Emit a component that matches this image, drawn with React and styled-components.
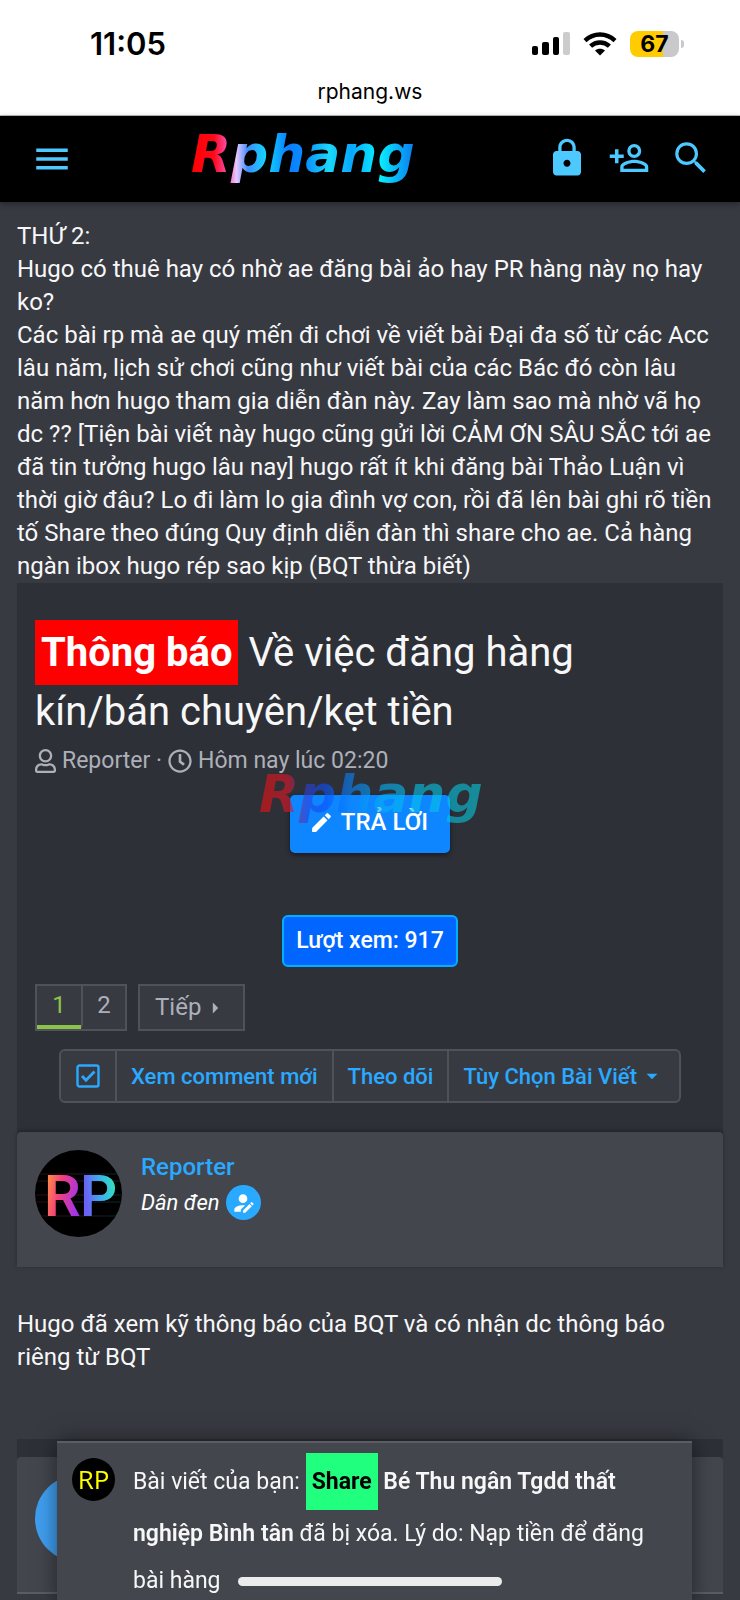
import React from 'react';
import styled, { createGlobalStyle, css } from 'styled-components';
import { MdMenu, MdLock, MdEdit, MdArrowRight, MdArrowDropDown } from 'react-icons/md';
import { FaRegUser, FaRegClock } from 'react-icons/fa';

const colors = {
  page: '#383a42',
  panel: '#2d3037',
  card: '#43464d',
  line: '#4f5259',
  accent: '#29a9ff',
  headerIcon: '#4dc9ff',
  muted: '#adb0b9',
  text: '#f7f7f8',
};

const GlobalStyle = createGlobalStyle`
  * { box-sizing: border-box; }
  body {
    margin: 0;
    background: ${colors.page};
    color: ${colors.text};
    font-family: Roboto, "Liberation Sans", sans-serif;
    font-size: 24px;
    line-height: 33px;
    overflow-x: hidden;
  }
  a { color: inherit; text-decoration: none; }
  button { font: inherit; border: 0; cursor: pointer; }
  p, h1 { margin: 0; }
  svg { display: block; flex: none; }
`;

const Page = styled.div`
  min-height: 100vh;
  overflow: hidden;
`;

const StatusBar = styled.div`
  height: 116px;
  background: #fff;
  color: #000;
  font-family: Inter, "Liberation Sans", sans-serif;
  border-bottom: 1px solid #bbb;
`;

const StatusRow = styled.div`
  display: flex;
  justify-content: space-between;
  align-items: center;
  padding: 26px 56px 0 90px;
`;

const Time = styled.span`
  font-size: 31px;
  line-height: 36px;
  font-weight: 600;
`;

const StatusIcons = styled.div`
  display: flex;
  align-items: center;
  gap: 13px;
`;

const Battery = styled.div`
  display: flex;
  align-items: center;
  gap: 2px;
  &::after {
    content: '';
    width: 3px;
    height: 8px;
    border-radius: 0 4px 4px 0;
    background: #c9c9cb;
  }
`;

const BatteryLevel = styled.span`
  width: 49px;
  height: 26px;
  border-radius: 8px;
  background: linear-gradient(90deg, #ffcc00 67%, #c9c9cb 67%);
  font-size: 23px;
  line-height: 27px;
  font-weight: 700;
  text-align: center;
`;

const Address = styled.div`
  padding-top: 16px;
  font-size: 21px;
  line-height: 28px;
  text-align: center;
`;

const Header = styled.header`
  position: relative;
  z-index: 1;
  display: flex;
  align-items: center;
  height: 86px;
  padding: 0 28px 0 31px;
  background: #000;
  color: ${colors.headerIcon};
  box-shadow: 0 2px 6px rgba(0, 0, 0, 0.35);
`;

const HomeLink = styled.a`
  flex: 1;
  display: flex;
  justify-content: center;
  padding-right: 10px;
`;

const IconButton = styled.button`
  display: block;
  width: 42px;
  height: 42px;
  padding: 0;
  background: none;
  color: inherit;
`;

const HeaderTools = styled.div`
  display: flex;
  justify-content: flex-end;
  gap: 20px;
  padding-bottom: 2px;
`;

const Content = styled.main`
  padding: 18px 17px 0;
`;

const Panel = styled.section`
  background: ${colors.panel};
`;

const PanelBody = styled.div`
  padding: 37px 18px 29px;
`;

const Title = styled.h1`
  font-size: 40px;
  line-height: 53px;
  font-weight: 400;
`;

const Tag = styled.span`
  display: inline-block;
  padding: 6px;
  font-weight: 700;
  ${(p) => (p.$kind === 'share'
    ? css`background: #21ff7e; color: #000; padding: 5px 6px;`
    : css`background: #ff0000; color: #fff;`)}
`;

const Meta = styled.div`
  display: flex;
  align-items: center;
  gap: 6px;
  padding-top: 6px;
  color: ${colors.muted};
  font-size: 23px;
  svg:first-child { width: 21px; }
`;

const ReplyArea = styled.div`
  position: relative;
  display: flex;
  justify-content: center;
  padding-top: 18px;
`;

const ReplyButton = styled.button`
  display: flex;
  align-items: center;
  gap: 7px;
  height: 58px;
  padding: 0 22px 3px 19px;
  border-radius: 5px;
  background: #0d86ff;
  color: #fff;
  font-weight: 500;
  box-shadow: 0 2px 5px rgba(0, 0, 0, 0.5);
`;

const Watermark = styled.div`
  position: absolute;
  top: -14px;
  left: 50%;
  margin-left: -113px;
  opacity: 0.6;
  pointer-events: none;
`;

const Views = styled.div`
  width: fit-content;
  margin: 62px auto 0;
  padding: 8px 12px;
  border: 2px solid #00b0ff;
  border-radius: 6px;
  background: #0066ff;
  color: #fff;
  font-size: 23px;
  font-weight: 500;
  line-height: 32px;
`;

const Pager = styled.nav`
  display: flex;
  gap: 11px;
  margin-top: 17px;
  color: ${colors.muted};
`;

const PageBox = styled.div`
  display: flex;
  border: 2px solid ${colors.line};
  background: ${colors.page};
`;

const PageLink = styled.a`
  display: flex;
  align-items: center;
  justify-content: center;
  min-width: 44px;
  height: 43px;
  border-bottom: 4px solid transparent;
  ${(p) => p.$wide && css`padding: 4px 15px 0; gap: 1px;`}
  ${(p) => p.$current && css`color: #8bc34a; border-bottom-color: #8bc34a;`}
  & + & { border-left: 2px solid ${colors.line}; }
`;

const Actions = styled.div`
  display: flex;
  width: fit-content;
  margin: 18px auto 0;
  border: 2px solid ${colors.line};
  border-radius: 6px;
  background: ${colors.page};
  color: ${colors.accent};
  font-size: 22px;
  font-weight: 500;
`;

const actionCell = css`
  display: flex;
  align-items: center;
  gap: 2px;
  height: 50px;
  padding: 0 14px;
  background: none;
  color: inherit;
  & + * { border-left: 2px solid ${colors.line}; }
`;

const ActionLink = styled.a`${actionCell}`;
const ActionButton = styled.button`
  ${actionCell}
  font-weight: 500;
`;
const CheckCell = styled.label`
  ${actionCell}
  position: relative;
  padding: 0 13px;
  input {
    position: absolute;
    inset: 0;
    margin: 0;
    opacity: 0;
  }
`;

const UserCard = styled.article`
  display: flex;
  gap: 19px;
  height: 135px;
  padding: 18px;
  border-radius: 4px 4px 0 0;
  background: ${colors.card};
  box-shadow: 0 -1px 4px rgba(0, 0, 0, 0.3);
`;

const UserName = styled.a`
  display: block;
  padding: 1px 0;
  color: ${colors.accent};
  font-weight: 500;
`;

const UserTitle = styled.div`
  display: flex;
  align-items: center;
  gap: 6px;
  font-size: 22px;
  font-style: italic;
  color: #fff;
`;

const Badge = styled.span`
  display: grid;
  place-items: center;
  width: 35px;
  height: 35px;
  border-radius: 50%;
  background: ${colors.accent};
`;

const Note = styled.p`
  padding: 41px 0 65px;
`;

const NextPanel = styled(Panel)`
  padding-top: 18px;
`;

const NextCard = styled.div`
  height: 137px;
  padding: 18px;
  border-radius: 4px 4px 0 0;
  border-bottom: 2px solid #5b5d64;
  background: ${colors.card};
`;

const BlueAvatar = styled.div`
  width: 87px;
  height: 87px;
  border-radius: 50%;
  background: #409ff0;
`;

const Toast = styled.aside`
  position: fixed;
  left: 57px;
  right: 48px;
  bottom: -4px;
  z-index: 2;
  display: flex;
  gap: 18px;
  padding: 10px 15px 0;
  border-top: 2px solid #5b5d64;
  background: ${colors.card};
  box-shadow: 0 0 20px rgba(0, 0, 0, 0.5);
  font-size: 23px;
  line-height: 47px;
`;

const SmallAvatar = styled.div`
  flex: none;
  width: 43px;
  height: 43px;
  margin-top: 5px;
  border-radius: 50%;
  background: #000;
  color: #ffff00;
  font-family: "Open Sans", "Noto Sans", sans-serif;
  font-size: 26px;
  line-height: 43px;
  text-align: center;
`;

const Strong = styled.b`
  font-weight: 600;
`;

const HomeIndicator = styled.div`
  position: fixed;
  z-index: 3;
  bottom: 14px;
  left: 50%;
  width: 264px;
  height: 9px;
  margin-left: -132px;
  border-radius: 5px;
  background: #ececec;
`;

function MdiIcon({ d, size }) {
  return (
    <svg width={size} height={size} viewBox="0 0 24 24" fill="currentColor" aria-hidden="true">
      <path d={d} />
    </svg>
  );
}

const ACCOUNT_PLUS = 'M15,4A4,4 0 0,0 11,8A4,4 0 0,0 15,12A4,4 0 0,0 19,8A4,4 0 0,0 15,4M15,5.9C16.16,5.9 17.1,6.84 17.1,8C17.1,9.16 16.16,10.1 15,10.1A2.1,2.1 0 0,1 12.9,8A2.1,2.1 0 0,1 15,5.9M4,7V10H1V12H4V15H6V12H9V10H6V7H4M15,13C12.33,13 7,14.33 7,17V20H23V17C23,14.33 17.67,13 15,13M15,14.9C17.97,14.9 21.1,16.36 21.1,17V18.1H8.9V17C8.9,16.36 12,14.9 15,14.9Z';
const MAGNIFY = 'M9.5,3A6.5,6.5 0 0,1 16,9.5C16,11.11 15.41,12.59 14.44,13.73L14.71,14H15.5L20.5,19L19,20.5L14,15.5V14.71L13.73,14.44C12.59,15.41 11.11,16 9.5,16A6.5,6.5 0 0,1 3,9.5A6.5,6.5 0 0,1 9.5,3M9.5,4.8A4.7,4.7 0 0,0 4.8,9.5A4.7,4.7 0 0,0 9.5,14.2A4.7,4.7 0 0,0 14.2,9.5A4.7,4.7 0 0,0 9.5,4.8Z';
const ACCOUNT_EDIT = 'M21.7,13.35L20.7,14.35L18.65,12.3L19.65,11.3C19.86,11.09 20.21,11.09 20.42,11.3L21.7,12.58C21.91,12.79 21.91,13.14 21.7,13.35M12,18.94L18.06,12.88L20.11,14.93L14.06,21H12V18.94M12,14C7.58,14 4,15.79 4,18V20H10V18.11L14,14.11C13.34,14.03 12.67,14 12,14M12,4A4,4 0 0,0 8,8A4,4 0 0,0 12,12A4,4 0 0,0 16,8A4,4 0 0,0 12,4Z';

function Logo({ id, flat }) {
  const stops = flat
    ? [['0', '#f01010'], ['0.14', '#e01828'], ['0.22', '#3040d8'], ['0.3', '#0a50ff'], ['0.4', '#0a80ff'], ['0.55', '#06b0f8'], ['0.7', '#06c4ec'], ['1', '#08c8d8']]
    : [['0', '#ff0000'], ['0.11', '#ff0818'], ['0.17', '#ff4fb0'], ['0.21', '#e8c8ff'], ['0.26', '#3f8cff'], ['0.34', '#10d8ff'], ['0.44', '#0a7cff'], ['0.52', '#0a90ff'], ['0.62', '#1ad8f8'], ['0.72', '#08a8ff'], ['0.84', '#08f0ff'], ['1', '#0a78f0']];
  return (
    <svg width="232" height="72" viewBox="0 0 232 72" role="img" aria-label="Rphang">
      <defs>
        <linearGradient id={id} x1="0" x2="226" y1="0" y2="0" gradientUnits="userSpaceOnUse">
          {stops.map(([o, c]) => <stop key={o} offset={o} stopColor={c} />)}
        </linearGradient>
      </defs>
      <text
        x="2"
        y="49"
        fontFamily="DejaVu Sans, sans-serif"
        fontWeight="700"
        fontStyle="italic"
        fontSize="52"
        fill={`url(#${id})`}
      >
        Rphang
      </text>
    </svg>
  );
}

function SignalIcon() {
  return (
    <svg width="38" height="24" viewBox="0 0 38 24" aria-hidden="true">
      <rect x="0" y="14" width="6" height="9" rx="2" />
      <rect x="10" y="10" width="7" height="13" rx="2" />
      <rect x="21" y="5" width="6" height="18" rx="2" />
      <rect x="31" y="0" width="7" height="23" rx="2" fill="#cccccc" />
    </svg>
  );
}

function WifiIcon() {
  return (
    <svg width="34" height="24" viewBox="0 0 34 24" fill="none" stroke="#000" strokeWidth="4.4" aria-hidden="true">
      <path d="M2 8.6C10.500 .4 23.500 .4 32 8.600" />
      <path d="M7.600 14.200C13 9.200 21 9.200 26.400 14.200" />
      <path d="M17 23.500L12 18.600C14.700 16 19.300 16 22 18.600Z" fill="#000" stroke="none" />
    </svg>
  );
}

function ReporterAvatar() {
  return (
    <svg width="87" height="87" viewBox="0 0 87 87" role="img" aria-label="RP">
      <defs>
        <linearGradient id="avatarR" x1="0" x2="1" y1="0" y2="0.35">
          <stop offset="0.1" stopColor="#ff9a3c" />
          <stop offset="0.5" stopColor="#f5407a" />
          <stop offset="1" stopColor="#a034e8" />
        </linearGradient>
        <linearGradient id="avatarP" x1="0" x2="1" y1="0.2" y2="0">
          <stop offset="0.1" stopColor="#6a62f5" />
          <stop offset="0.5" stopColor="#3cb0ee" />
          <stop offset="1" stopColor="#2ff0a8" />
        </linearGradient>
        <linearGradient id="avatarGlow" x1="0" x2="87" y1="0" y2="0" gradientUnits="userSpaceOnUse">
          <stop offset="0" stopColor="#3a0c10" />
          <stop offset="0.6" stopColor="#2a2038" />
          <stop offset="1" stopColor="#0a3436" />
        </linearGradient>
      </defs>
      <circle cx="43.5" cy="43.5" r="43.5" fill="#000" />
      <g stroke="url(#avatarGlow)" strokeWidth="1" opacity="0.8">
        <path d="M5 24H82M2 31H85M1 45H86M1 52H86M6 66H81" />
      </g>
      <g fontFamily="Roboto, sans-serif" fontWeight="600" fontSize="58">
        <text x="9" y="66" fill="url(#avatarR)">R</text>
        <text x="45" y="66" fill="url(#avatarP)">P</text>
      </g>
    </svg>
  );
}

function CheckIcon() {
  return (
    <svg width="28" height="28" viewBox="0 0 28 28" fill="none" stroke="currentColor" aria-hidden="true">
      <rect x="3.5" y="3.5" width="21" height="21" rx="2" strokeWidth="2.4" />
      <path d="M8 14L12 18.200L20.500 9.500" strokeWidth="2.8" />
    </svg>
  );
}

export default function App() {
  return (
    <Page>
      <GlobalStyle />
      <StatusBar>
        <StatusRow>
          <Time>11:05</Time>
          <StatusIcons>
            <SignalIcon />
            <WifiIcon />
            <Battery><BatteryLevel>67</BatteryLevel></Battery>
          </StatusIcons>
        </StatusRow>
        <Address>rphang.ws</Address>
      </StatusBar>

      <Header>
        <IconButton aria-label="Menu"><MdMenu size={42} /></IconButton>
        <HomeLink href="#home"><Logo id="logoFill" /></HomeLink>
        <HeaderTools>
          <IconButton aria-label="Đăng nhập"><MdLock size={42} /></IconButton>
          <IconButton aria-label="Đăng ký"><MdiIcon d={ACCOUNT_PLUS} size={42} /></IconButton>
          <IconButton aria-label="Tìm kiếm"><MdiIcon d={MAGNIFY} size={42} /></IconButton>
        </HeaderTools>
      </Header>

      <Content>
        <p>
          THỨ 2:<br />
          Hugo có thuê hay có nhờ ae đăng bài ảo hay PR hàng này nọ hay ko?<br />
          Các bài rp mà ae quý mến đi chơi về viết bài Đại đa số từ các Acc lâu năm, lịch sử chơi
          cũng như viết bài của các Bác đó còn lâu năm hơn hugo tham gia diễn đàn này. Zay làm sao
          mà nhờ vã họ dc ?? [Tiện bài viết này hugo cũng gửi lời CẢM ƠN SÂU SẮC tới ae đã tin
          tưởng hugo lâu nay] hugo rất ít khi đăng bài Thảo Luận vì thời giờ đâu? Lo đi làm lo gia
          đình vợ con, rồi đã lên bài ghi rõ tiền tố Share theo đúng Quy định diễn đàn thì share
          cho ae. Cả hàng ngàn ibox hugo rép sao kịp (BQT thừa biết)
        </p>

        <Panel>
          <PanelBody>
            <Title><Tag>Thông báo</Tag> Về việc đăng hàng kín/bán chuyên/kẹt tiền</Title>
            <Meta>
              <FaRegUser size={24} />
              <span>Reporter ·</span>
              <FaRegClock size={24} />
              <span>Hôm nay lúc 02:20</span>
            </Meta>
            <ReplyArea>
              <ReplyButton><MdEdit size={25} />TRẢ LỜI</ReplyButton>
              <Watermark><Logo id="watermarkFill" flat /></Watermark>
            </ReplyArea>
            <Views>Lượt xem: 917</Views>
            <Pager>
              <PageBox>
                <PageLink href="#1" $current>1</PageLink>
                <PageLink href="#2">2</PageLink>
              </PageBox>
              <PageBox>
                <PageLink href="#next" $wide>Tiếp <MdArrowRight size={26} /></PageLink>
              </PageBox>
            </Pager>
            <Actions>
              <CheckCell><input type="checkbox" defaultChecked aria-label="Chọn" /><CheckIcon /></CheckCell>
              <ActionLink href="#new">Xem comment mới</ActionLink>
              <ActionLink href="#follow">Theo dõi</ActionLink>
              <ActionButton>Tùy Chọn Bài Viết <MdArrowDropDown size={26} /></ActionButton>
            </Actions>
          </PanelBody>
          <UserCard>
            <ReporterAvatar />
            <div>
              <UserName href="#reporter">Reporter</UserName>
              <UserTitle>Dân đen <Badge><MdiIcon d={ACCOUNT_EDIT} size={26} /></Badge></UserTitle>
            </div>
          </UserCard>
        </Panel>

        <Note>Hugo đã xem kỹ thông báo của BQT và có nhận dc thông báo riêng từ BQT</Note>

        <NextPanel>
          <NextCard><BlueAvatar /></NextCard>
        </NextPanel>
      </Content>

      <Toast role="status">
        <SmallAvatar>RP</SmallAvatar>
        <p>
          Bài viết của bạn: <Tag $kind="share">Share</Tag> <Strong>Bé Thu ngân Tgdd thất nghiệp Bình tân</Strong> đã
          bị xóa. Lý do: Nạp tiền để đăng bài hàng
        </p>
      </Toast>
      <HomeIndicator />
    </Page>
  );
}
